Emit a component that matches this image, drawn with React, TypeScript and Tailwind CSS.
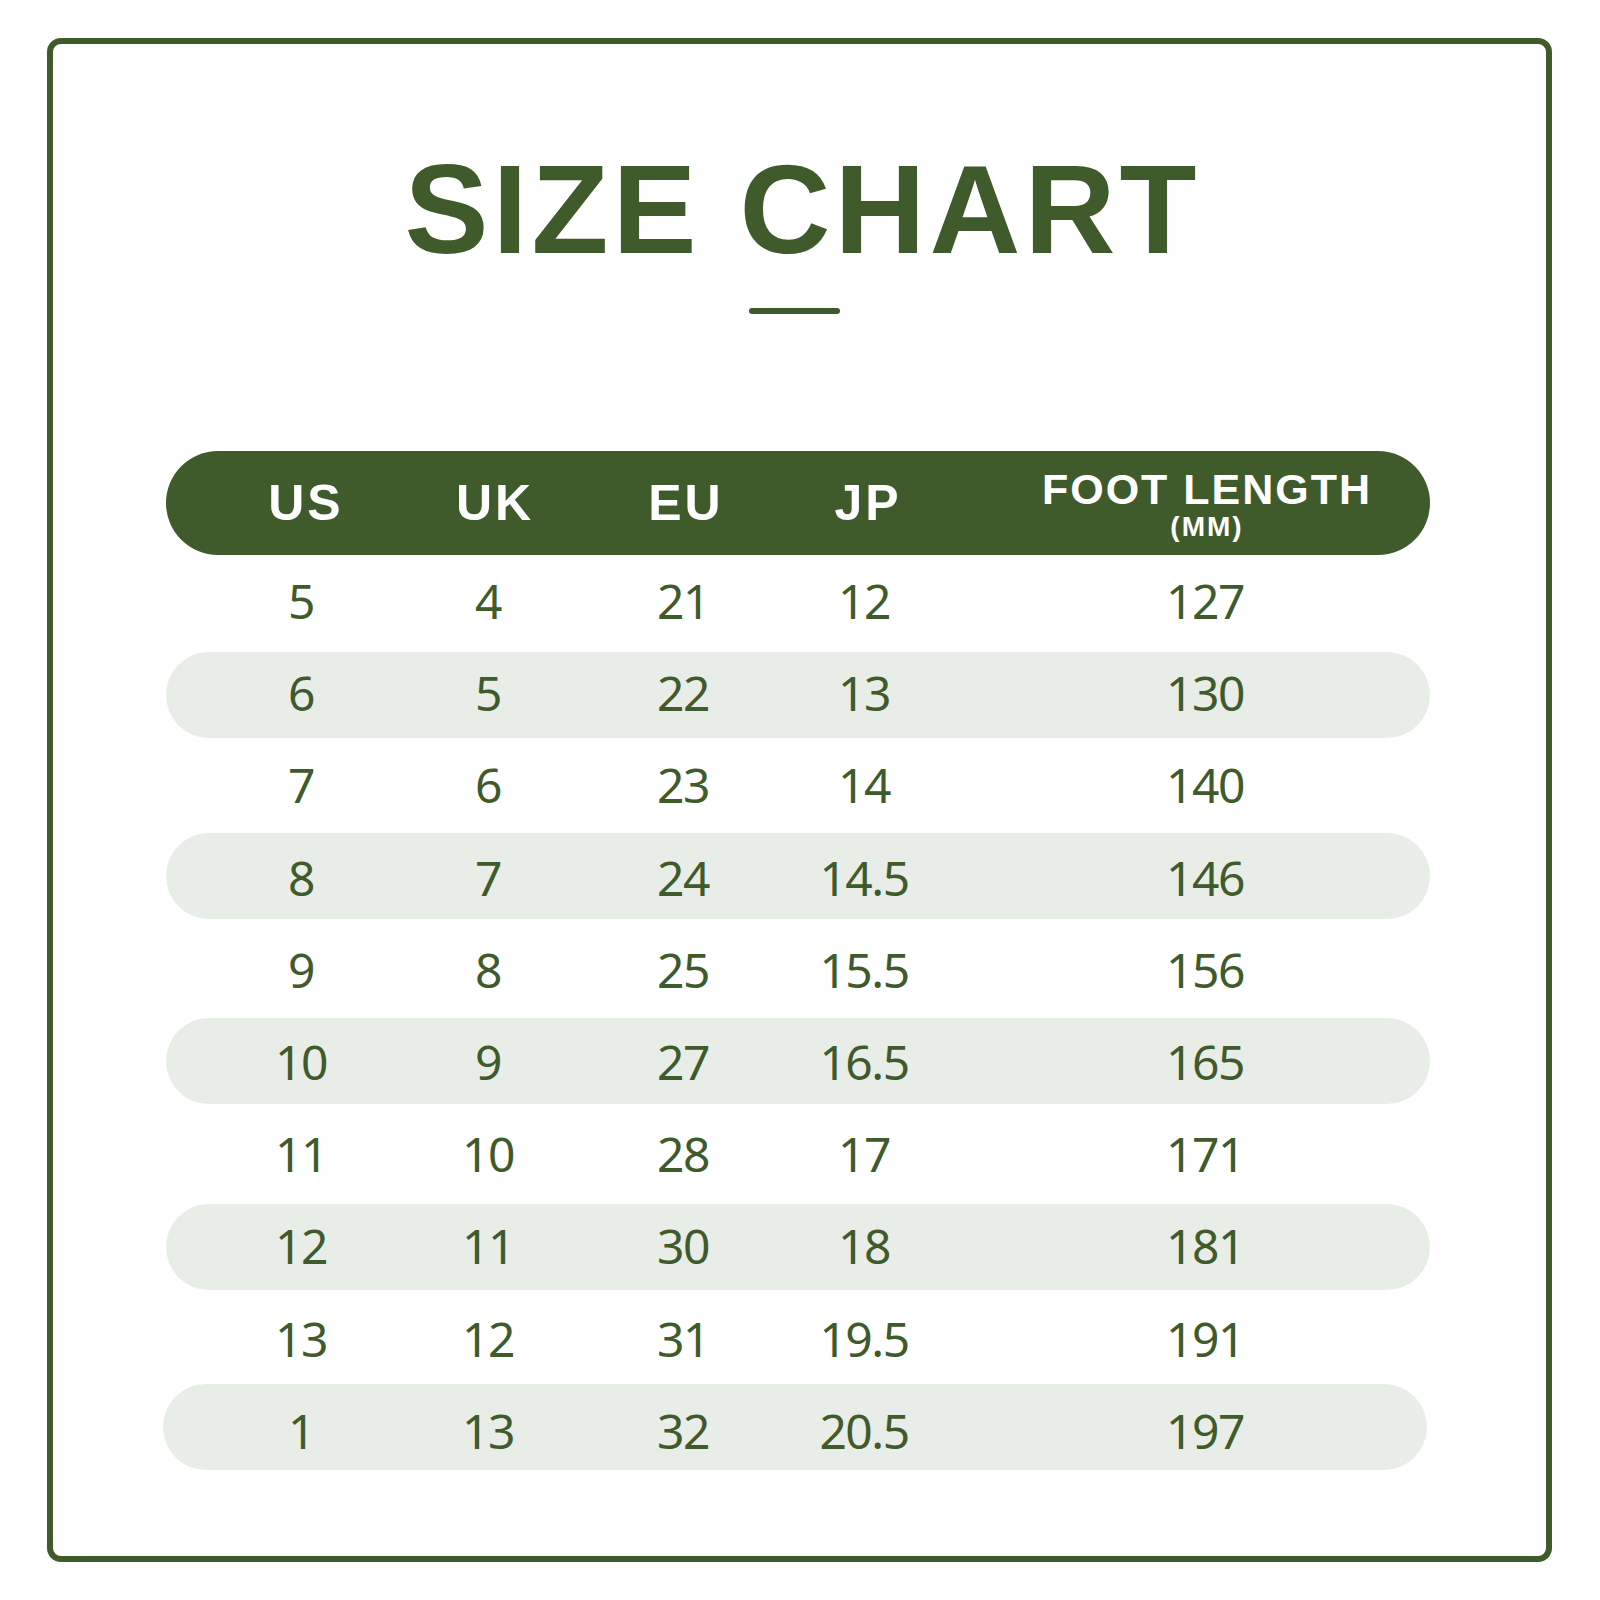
import React from "react";

const rows: string[][] = [
  ["5", "4", "21", "12", "127"],
  ["6", "5", "22", "13", "130"],
  ["7", "6", "23", "14", "140"],
  ["8", "7", "24", "14.5", "146"],
  ["9", "8", "25", "15.5", "156"],
  ["10", "9", "27", "16.5", "165"],
  ["11", "10", "28", "17", "171"],
  ["12", "11", "30", "18", "181"],
  ["13", "12", "31", "19.5", "191"],
  ["1", "13", "32", "20.5", "197"],
];

const bandShift = [
  ["", ""],
  ["translate-y-[2px]", "-translate-y-[2px]"],
  ["", ""],
  ["-translate-y-[2px]", "translate-y-[2px]"],
  ["", ""],
  ["-translate-y-[1px]", "translate-y-[1px]"],
  ["", ""],
  ["translate-y-[1px]", "-translate-y-[1px]"],
  ["", ""],
  ["-translate-y-[4px]", "translate-y-[4px]"],
];

function HeadCells({ values }: { values: React.ReactNode[] }) {
  const base = "flex flex-col items-center justify-center";
  return (
    <div className="flex h-full pl-[50px]">
      <div className={`${base} w-[180px]`}>{values[0]}</div>
      <div className={`${base} w-[180px] ml-[9px]`}>{values[1]}</div>
      <div className={`${base} w-[180px] ml-[11px]`}>{values[2]}</div>
      <div className={`${base} w-[180px] ml-[2px]`}>{values[3]}</div>
      <div className={`${base} w-[400px] ml-[49px]`}>{values[4]}</div>
    </div>
  );
}

function RowCells({ values }: { values: React.ReactNode[] }) {
  const base = "flex flex-col items-center justify-center";
  return (
    <div className="flex h-full pl-[45px]">
      <div className={`${base} w-[180px]`}>{values[0]}</div>
      <div className={`${base} w-[180px] ml-[7px]`}>{values[1]}</div>
      <div className={`${base} w-[180px] ml-[15px]`}>{values[2]}</div>
      <div className={`${base} w-[180px] ml-[1px]`}>{values[3]}</div>
      <div className={`${base} w-[400px] ml-[51px]`}>{values[4]}</div>
    </div>
  );
}

export default function App() {
  const head = "text-white font-bold text-[50px] leading-none tracking-[3px] font-['Liberation_Sans',Arial,sans-serif]";
  return (
    <div className="w-[1600px] h-[1600px] bg-white pt-[38px] pl-[47px]">
      <div className="w-[1505px] h-[1524px] border-[6px] border-[#3f5a2b] rounded-[14px] flex flex-col">
        <div className="pt-[103px] flex justify-center">
          <h1 className="text-[126px] leading-none font-bold text-[#3f5a2b] tracking-[4px] pl-[6px] font-['Liberation_Sans',Arial,sans-serif]">
            SIZE CHART
          </h1>
        </div>
        <div className="flex justify-center mt-[35px]">
          <div className="w-[91px] h-[6px] rounded-full bg-[#3f5a2b] mr-[10px]" />
        </div>
        <div className="mt-[137px] ml-[113px] w-[1264px]">
          <div className="h-[104px] rounded-full bg-[#3f5a2b]">
            <HeadCells
              values={[
                <span className={head}>US</span>,
                <span className={head}>UK</span>,
                <span className={head}>EU</span>,
                <span className={head}>JP</span>,
                <div className="flex flex-col items-center text-white font-bold font-['Liberation_Sans',Arial,sans-serif]">
                  <span className="text-[43px] leading-none tracking-[2px] mt-[2px]">FOOT LENGTH</span>
                  <span className="text-[28px] leading-none tracking-[2px] mt-[2px]">(MM)</span>
                </div>,
              ]}
            />
          </div>
          <div className="flex flex-col">
            {rows.map((r, i) => (
              <div key={i} className="h-[92.2px] flex items-center">
                <div
                  className={`h-[86px] w-[1264px] rounded-full ${i % 2 === 1 ? "bg-[#e9ede7]" : ""} ${i === 9 ? "-ml-[3px]" : ""} ${bandShift[i][0]}`}
                >
                  <div className={`h-full ${i === 9 ? "ml-[3px]" : ""} ${bandShift[i][1]}`}>
                    <RowCells
                      values={r.map((v) => (
                        <span className="text-[48px] leading-none text-[#3f5a2b] tracking-[-1.5px] font-['Noto_Sans',sans-serif]">
                          {v}
                        </span>
                      ))}
                    />
                  </div>
                </div>
              </div>
            ))}
          </div>
        </div>
      </div>
    </div>
  );
}
